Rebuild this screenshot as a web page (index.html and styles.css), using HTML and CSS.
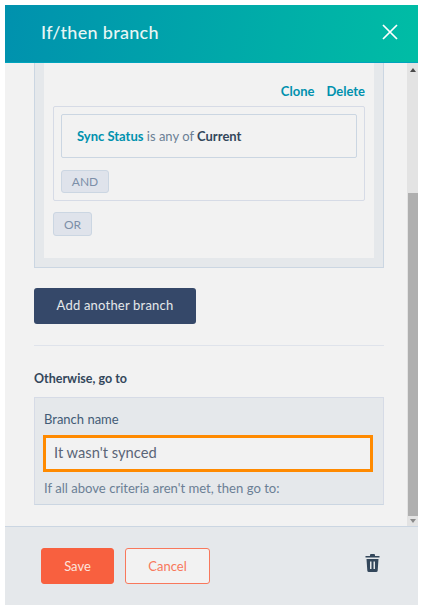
FILE: index.html
```html
<!DOCTYPE html>
<html lang="en">
<head>
    <meta charset="UTF-8">
    <title>If/then branch</title>
    <link rel="stylesheet" href="styles.css">
</head>
<body>
    <div class="panel">
        <div class="panel-header">
            <h1>If/then branch</h1>
            <svg class="close-icon" width="16" height="16" viewBox="0 0 16 16">
                <path d="M1 1L15 15M15 1L1 15" stroke="#fff" stroke-width="1.7" fill="none"/>
            </svg>
        </div>

        <div class="panel-middle">
            <div class="panel-body">
                <div class="branch-box">
                    <div class="branch-inner">
                        <div class="branch-actions">
                            <a>Clone</a>
                            <a>Delete</a>
                        </div>
                        <div class="filter-group">
                            <div class="filter-row">
                                <span class="filter-prop">Sync Status</span> is any of <b>Current</b>
                            </div>
                            <button class="small-btn and-btn">AND</button>
                        </div>
                        <button class="small-btn or-btn">OR</button>
                    </div>
                </div>

                <button class="add-btn">Add another branch</button>
                <hr class="divider">

                <h2>Otherwise, go to</h2>
                <div class="otherwise-box">
                    <label for="branchName">Branch name</label>
                    <input type="text" id="branchName" value="It wasn't synced">
                    <p>If all above criteria aren't met, then go to:</p>
                </div>
            </div>

            <div class="scrollbar">
                <div class="arrow-up"></div>
                <div class="thumb"></div>
                <div class="arrow-down"></div>
            </div>
        </div>

        <div class="panel-footer">
            <button class="save-btn">Save</button>
            <button class="cancel-btn">Cancel</button>
            <svg class="trash-icon" width="15" height="20" viewBox="0 0 15 20">
                <path d="M5 3V2a1 1 0 0 1 1-1h3a1 1 0 0 1 1 1v1h4.500v1.600H.5V3z" fill="#33475b"/>
                <path fill-rule="evenodd" d="M1.500 6h12l-.8 11.500a1.600 1.600 0 0 1-1.600 1.500H3.900a1.600 1.600 0 0 1-1.600-1.500zM5 8.500v7.500h1.500V8.500zM8.500 8.500v7.500H10V8.500z" fill="#33475b"/>
            </svg>
        </div>
    </div>
</body>
</html>
```

FILE: styles.css
```css
body {
    margin: 0;
    background: #fff;
    font-family: Lato, "Open Sans", sans-serif;
    color: #33475b;
}

.panel {
    width: 413px;
    height: 600px;
    margin: 5px 0 0 5px;
    display: flex;
    flex-direction: column;
    background: #f2f2f2;
}

.panel-header {
    height: 54px;
    padding: 0 20px 3px 36px;
    display: flex;
    justify-content: space-between;
    align-items: center;
    background: linear-gradient(100deg, #0091ae 0%, #00bda5 100%);
    border-bottom: 1px solid #00a4bd;
}

.panel-header h1 {
    margin: 0;
    font-size: 18px;
    font-weight: 500;
    letter-spacing: 0.3px;
    color: #e8f6f5;
}

.panel-middle {
    height: 463px;
    display: flex;
}

.panel-body {
    flex: none;
    width: 350px;
    padding: 0 23px 0 29px;
}

.branch-box {
    padding: 0 9px 9px;
    background: #e5e8eb;
    border: 1px solid #cbd6e2;
    border-top: none;
}

.branch-inner {
    height: 195px;
    padding: 0 9px;
    background: #f2f2f2;
}

.branch-actions {
    padding-top: 20px;
    height: 23px;
    display: flex;
    justify-content: flex-end;
    gap: 12px;
    font-size: 13px;
    line-height: 16px;
    font-weight: 700;
    color: #0091ae;
}

.filter-group {
    height: 79px;
    padding: 7px;
    background: #f2f2f2;
    border: 1px solid #d6dbe6;
    border-radius: 2px;
}

.filter-row {
    height: 42px;
    padding-left: 15px;
    line-height: 42px;
    font-size: 13px;
    color: #6b7f95;
    border: 1px solid #cbd6e2;
    border-radius: 2px;
}

.filter-row b {
    color: #33475b;
}

.filter-prop {
    font-weight: 700;
    color: #0091ae;
}

.small-btn {
    display: block;
    height: 23px;
    padding: 0;
    font-family: inherit;
    font-size: 12px;
    color: #7c8fa8;
    background: #dfe3eb;
    border: 1px solid #cbd6e2;
    border-radius: 3px;
}

.and-btn {
    width: 48px;
    margin-top: 12px;
}

.or-btn {
    width: 39px;
    height: 24px;
    margin-top: 11px;
}

.add-btn {
    display: block;
    width: 162px;
    height: 36px;
    margin-top: 20px;
    padding: 0 0 3px;
    font-family: inherit;
    font-size: 13px;
    letter-spacing: 0.2px;
    color: #e5e8eb;
    background: #354869;
    border: none;
    border-radius: 3px;
}

.divider {
    margin: 21px 0 0;
    border: none;
    border-top: 1px solid #dfe3eb;
}

h2 {
    margin: 25px 0 11px;
    font-size: 12.500px;
    line-height: 15px;
    font-weight: 700;
}

.otherwise-box {
    height: 106px;
    padding: 0 9px;
    background: #e5e8eb;
    border: 1px solid #d6dbe6;
    border-bottom-color: #cbd6e2;
}

.otherwise-box label {
    display: block;
    padding-top: 13px;
    font-size: 13px;
    line-height: 16px;
    color: #425b76;
}

.otherwise-box input {
    display: block;
    box-sizing: border-box;
    width: 330px;
    height: 37px;
    margin: 8px 0 0 -1px;
    padding: 0 8px 3px;
    font-family: inherit;
    font-size: 14.700px;
    color: #5a6577;
    background: #f2f2f2;
    border: 3px solid #ff8a00;
    outline: none;
}

.otherwise-box p {
    margin: 8px 0 0;
    font-size: 13.100px;
    line-height: 16px;
    color: #6b7f95;
}

.scrollbar {
    width: 11px;
    display: flex;
    flex-direction: column;
    background: #e3e3e3;
}

.arrow-up {
    width: 0;
    margin: 5px auto 0;
    border: 3px solid transparent;
    border-top: none;
    border-bottom: 4px solid #4a4a4a;
}

.thumb {
    width: 10px;
    height: 323px;
    margin: 121px 0 0 1px;
    background: #afafaf;
}

.arrow-down {
    width: 0;
    margin: 3px auto 0;
    border: 3px solid transparent;
    border-bottom: none;
    border-top: 4px solid #8a8a8a;
}

.panel-footer {
    height: 79px;
    box-sizing: border-box;
    padding: 0 38px 1px 36px;
    display: flex;
    align-items: center;
    background: #e5e8eb;
    border-top: 1px solid #cbd6e2;
}

.save-btn, .cancel-btn {
    height: 36px;
    padding: 0;
    font-family: inherit;
    font-size: 13px;
    border-radius: 3px;
}

.save-btn {
    width: 73px;
    color: #fde4dc;
    background: #f8603f;
    border: 1px solid #f8603f;
}

.cancel-btn {
    width: 85px;
    margin-left: 11px;
    color: #f8785c;
    background: #f2f2f2;
    border: 1px solid #f8785c;
}

.trash-icon {
    margin-left: auto;
    margin-top: -6px;
}
```
